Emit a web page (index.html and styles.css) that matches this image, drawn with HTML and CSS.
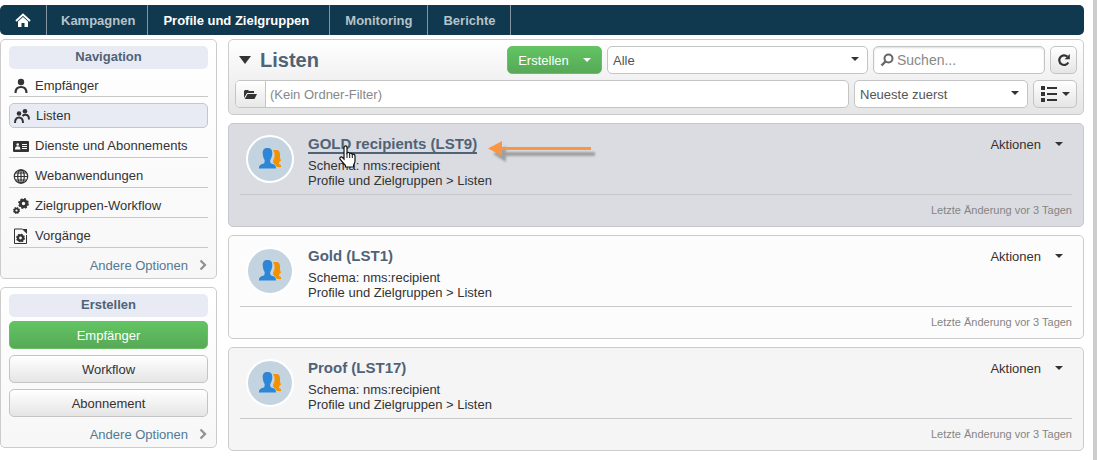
FILE: index.html
```html
<!DOCTYPE html>
<html lang="de">
<head>
<meta charset="utf-8">
<title>Listen</title>
<link rel="stylesheet" href="styles.css">
</head>
<body>
<svg class="defs" aria-hidden="true">
  <symbol id="caret" viewBox="0 0 8 4"><path d="M0 0h8L4 4z" fill="currentColor"/></symbol>
  <symbol id="chevron" viewBox="0 0 8 12"><path d="M1.500 1.500 6 6l-4.500 4.500" fill="none" stroke="#929292" stroke-width="2.300"/></symbol>
  <symbol id="people" viewBox="0 0 22 22">
    <path d="M14 2h3.500c2.500 0 3.500 2 3.500 4.500V10l1 2.500-1.500 1-.5 2.500 2 1.200V19h-4l-2.500-3-1.500-1.500V13l1.500-3.500V5z" fill="#f39200"/>
    <path d="M8.500 0c3.500 0 5 2 4.800 5.500-.2 2.500-.8 4.500-2 6.500-.3 2 .2 3.300 1.500 3.800 2.700.8 4.200 1.400 4.200 4.700H0c0-3.300 1.500-3.900 4.200-4.700 1.300-.5 1.700-1.800 1.400-3.800C4.400 10 3.900 8 3.700 5.500 3.500 2 5 0 8.500 0z" fill="#2e86d6"/>
  </symbol>
  <symbol id="gear" viewBox="-8 -8 16 16">
    <circle r="4.500" fill="none" stroke="currentColor" stroke-width="4"/>
    <circle r="6.700" fill="none" stroke="currentColor" stroke-width="2.400" stroke-dasharray="3 2.260"/>
  </symbol>
</svg>
<div class="page">
  <nav class="topbar" aria-label="Hauptmenü">
    <a class="tab home" href="#" aria-label="Startseite"><svg width="16" height="15" viewBox="0 0 16 15"><path d="M1 8 8 1.500 15 8" fill="none" stroke="#fff" stroke-width="2"/><path d="M3 8.500 8 4l5 4.500V14H9.500v-4h-3v4H3z" fill="#fff"/></svg></a>
    <a class="tab narrow" href="#">Kampagnen</a>
    <a class="tab active" href="#">Profile und Zielgruppen</a>
    <a class="tab" href="#">Monitoring</a>
    <a class="tab" href="#">Berichte</a>
  </nav>
  <div class="columns">
    <aside class="sidebar">
      <section class="panel">
        <h2 class="panel-title">Navigation</h2>
        <ul class="menu">
          <li><a class="item first" href="#"><svg class="icon" viewBox="0 0 16 16"><circle cx="8" cy="4" r="3.200" fill="currentColor"/><path d="M2.500 15c0-4 2-6 5.500-6s5.500 2 5.500 6" fill="none" stroke="currentColor" stroke-width="2.200"/></svg>Empfänger</a></li>
          <li><a class="item current" href="#"><svg class="icon" viewBox="0 0 16 16"><circle cx="5" cy="5.500" r="2.300" fill="currentColor"/><circle cx="11" cy="3.200" r="2.300" fill="currentColor"/><path d="M1 15c0-3.500 1.300-5.500 4-5.500s4 2 4 5.500M8.500 8c1-1 2-1.200 3-1.200 2.500 0 3.500 1.800 3.500 4.700" fill="none" stroke="currentColor" stroke-width="2"/></svg>Listen</a></li>
          <li><a class="item" href="#"><svg class="icon" viewBox="0 0 16 16"><rect y="3" width="16" height="11" rx="1" fill="currentColor"/><circle cx="4.700" cy="6.500" r="1.300" fill="#fff"/><path d="M2 11.500c0-2 1-3.200 2.700-3.200s2.700 1.200 2.700 3.200z" fill="#fff"/><path d="M9 6.500h5M9 8.500h5M9 10.500h5" stroke="#fff"/></svg>Dienste und Abonnements</a></li>
          <li><a class="item" href="#"><svg class="icon" viewBox="0 0 16 16" fill="none" stroke="currentColor" stroke-width="1.200"><circle cx="8" cy="8.500" r="6.700"/><ellipse cx="8" cy="8.500" rx="3.300" ry="6.700"/><path d="M8 2v13M1 8.500h14M2.500 5h11M2.500 12h11"/></svg>Webanwendungen</a></li>
          <li><a class="item" href="#"><svg class="icon" viewBox="0 0 16 16"><use href="#gear" x="5" y="0" width="11" height="11"/><use href="#gear" x="0" y="9" width="7" height="7"/></svg>Zielgruppen-Workflow</a></li>
          <li><a class="item" href="#"><svg class="icon" viewBox="0 0 16 16"><path d="M1.500 1h8M1.500 1v14.500h12V7" fill="none" stroke="currentColor"/><path d="M9 1l5 5V1z" fill="currentColor"/><use href="#gear" x="3" y="5.500" width="9" height="9"/></svg>Vorgänge</a></li>
        </ul>
        <a class="more" href="#">Andere Optionen<svg width="8" height="12"><use href="#chevron"/></svg></a>
      </section>
      <section class="panel">
        <h2 class="panel-title">Erstellen</h2>
        <div class="actions">
          <button class="btn primary" type="button">Empfänger</button>
          <button class="btn" type="button">Workflow</button>
          <button class="btn" type="button">Abonnement</button>
        </div>
        <a class="more" href="#">Andere Optionen<svg width="8" height="12"><use href="#chevron"/></svg></a>
      </section>
    </aside>
    <main class="content">
      <header class="toolbar">
        <div class="row">
          <h1 class="title"><svg width="12" height="8" viewBox="0 0 12 8"><path d="M0 0h12L6 8z" fill="#333"/></svg>Listen</h1>
          <button class="btn primary create" type="button">Erstellen<svg class="caret" width="8" height="4"><use href="#caret"/></svg></button>
          <div class="select wide">
            <select aria-label="Filter"><option>Alle</option></select>
            <svg class="caret" width="8" height="4"><use href="#caret"/></svg>
          </div>
          <label class="field search">
            <svg width="14" height="14" viewBox="0 0 14 14" fill="none" stroke="#666"><circle cx="8.500" cy="5.500" r="4" stroke-width="2"/><path d="m5.500 8.500-4 4" stroke-width="2.400"/></svg>
            <input type="text" placeholder="Suchen..." aria-label="Suchen">
          </label>
          <button class="btn square" type="button" aria-label="Aktualisieren"><svg width="14" height="14" viewBox="0 0 14 14"><path d="M10.300 3.600A4.800 4.800 0 1 0 11.300 9.500" fill="none" stroke="#333" stroke-width="2.200"/><path d="M12.800 1v5.200H7.600z" fill="#333"/></svg></button>
        </div>
        <div class="row">
          <div class="field folder">
            <button class="folder-btn" type="button" aria-label="Ordner wählen"><svg width="13" height="9" viewBox="0 0 13 9"><path d="M0 8V1l1-1h3l1 1h5v2H3z" fill="#333"/><path d="M3.500 4H13l-2.500 5H.8z" fill="#333"/></svg></button>
            <input type="text" placeholder="(Kein Ordner-Filter)" aria-label="Ordner-Filter">
          </div>
          <div class="select sort">
            <select aria-label="Sortierung"><option>Neueste zuerst</option></select>
            <svg class="caret" width="8" height="4"><use href="#caret"/></svg>
          </div>
          <button class="btn view" type="button" aria-label="Ansicht"><svg width="16" height="16" viewBox="0 0 16 16"><path d="M0 0h4v4H0zM0 6h4v4H0zM0 12h4v4H0zM6 1h10v2H6zM6 7h10v2H6zM6 13h10v2H6z" fill="#333"/></svg><svg class="caret" width="8" height="4"><use href="#caret"/></svg></button>
        </div>
      </header>
      <article class="card hovered">
        <div class="card-main">
          <span class="avatar"><svg width="22" height="22"><use href="#people"/></svg></span>
          <div class="info">
            <h3><a href="#">GOLD recipients (LST9)</a></h3>
            <p>Schema: nms:recipient</p>
            <p>Profile und Zielgruppen &gt; Listen</p>
          </div>
          <button class="menu-btn" type="button">Aktionen<svg class="caret" width="8" height="4"><use href="#caret"/></svg></button>
        </div>
        <footer>Letzte Änderung vor 3 Tagen</footer>
        <svg class="pointer" width="17" height="24" viewBox="0 0 17 24"><path d="M5 2.500C5 .4 8 .4 8 2.500V8c1-1 2.500-.6 2.700.6 1-.7 2.300-.3 2.500.8 1.200-.6 2.800 0 2.800 1.600v5c0 2-1.500 3-1.500 5v1h-8v-1.500L1.200 14.500C0 12.500 2 11 3.500 12.500L5 14z" fill="#fff" stroke="#111" stroke-width="1.200"/><path d="M8 8v5M10.700 9v4M13.300 10v3" stroke="#111"/></svg>
        <svg class="arrow" width="114" height="26" viewBox="0 0 114 26"><g class="shade"><path d="M6 14 19 6v6h89v4H19v6z" fill="#777"/></g><path d="M1 8.500 15 1v6h89v3H15v6z" fill="#f79646"/></svg>
      </article>
      <article class="card">
        <div class="card-main">
          <span class="avatar"><svg width="22" height="22"><use href="#people"/></svg></span>
          <div class="info">
            <h3><a href="#">Gold (LST1)</a></h3>
            <p>Schema: nms:recipient</p>
            <p>Profile und Zielgruppen &gt; Listen</p>
          </div>
          <button class="menu-btn" type="button">Aktionen<svg class="caret" width="8" height="4"><use href="#caret"/></svg></button>
        </div>
        <footer>Letzte Änderung vor 3 Tagen</footer>
      </article>
      <article class="card alt">
        <div class="card-main">
          <span class="avatar"><svg width="22" height="22"><use href="#people"/></svg></span>
          <div class="info">
            <h3><a href="#">Proof (LST17)</a></h3>
            <p>Schema: nms:recipient</p>
            <p>Profile und Zielgruppen &gt; Listen</p>
          </div>
          <button class="menu-btn" type="button">Aktionen<svg class="caret" width="8" height="4"><use href="#caret"/></svg></button>
        </div>
        <footer>Letzte Änderung vor 3 Tagen</footer>
      </article>
    </main>
  </div>
</div>
</body>
</html>
```
FILE: styles.css
```css
* { box-sizing: border-box; }
body {
  margin: 0;
  background: #fff;
  color: #333;
  font: 13px/15px "Liberation Sans", Arial, sans-serif;
}
h1, h2, h3, p, ul { margin: 0; padding: 0; }
ul { list-style: none; }
a { color: inherit; text-decoration: none; }
svg { flex: none; display: block; }
button, input, select { font: inherit; color: inherit; }
button { cursor: pointer; }
.defs { position: absolute; width: 0; height: 0; }

.page {
  min-height: 100vh;
  padding: 5px 9px 7px 0;
  border-right: 4px solid #cdcdcd;
}
.topbar {
  display: flex;
  height: 30px;
  overflow: hidden;
  border-radius: 5px;
  background: #10384f;
  color: #b5c3ca;
  font-weight: bold;
}
.tab {
  display: flex;
  align-items: center;
  padding: 0 15px;
  border-right: 1px solid #8296a3;
}
.tab.narrow { padding: 0 12px 0 14px; }
.tab.active { padding-right: 20px; color: #fff; }

.columns { display: flex; align-items: flex-start; gap: 11px; margin-top: 4px; }
.sidebar { flex: none; width: 217px; display: flex; flex-direction: column; gap: 8px; }
.content { flex: 1; min-width: 0; display: flex; flex-direction: column; gap: 8px; }

.panel {
  padding: 6px 8px 1px;
  border: 1px solid #ccc;
  border-radius: 5px;
  background: linear-gradient(#fff, #f7f7f7);
}
.panel-title {
  height: 23px;
  border-radius: 5px;
  background: #e8ebf3;
  color: #4f6377;
  font-size: 13px;
  line-height: 22px;
  text-align: center;
}
.item {
  display: flex;
  align-items: center;
  gap: 6px;
  height: 30px;
  padding: 6px 4px 0;
  border-bottom: 1px solid #c8c8c8;
}
.item.first { height: 28px; }
.item.current {
  height: 25px;
  margin-top: 6px;
  padding-top: 0;
  border: 1px solid #c4c6cc;
  border-radius: 5px;
  background: #e8ebf3;
}
.icon { width: 16px; height: 16px; }
.more {
  display: flex;
  justify-content: flex-end;
  align-items: center;
  gap: 11px;
  height: 24px;
  margin-top: 5px;
  padding: 0 1px;
  color: #527994;
}
.actions { display: flex; flex-direction: column; gap: 6px; padding-top: 4px; }

.btn {
  display: flex;
  align-items: center;
  justify-content: center;
  height: 28px;
  padding: 0;
  border: 1px solid #c4c4c4;
  border-radius: 5px;
  background: linear-gradient(#fff, #e5e5e5);
}
.btn.primary {
  border-color: #69bf63;
  background: linear-gradient(#62c462, #57a957);
  color: #fff;
}

.toolbar {
  display: flex;
  flex-direction: column;
  gap: 6px;
  padding: 6px;
  border: 1px solid #ccc;
  border-radius: 5px;
  background: linear-gradient(#fff, #e5e5e5);
}
.row { display: flex; gap: 5px; }
.title {
  flex: 1;
  display: flex;
  align-items: center;
  gap: 9px;
  padding-left: 4px;
  color: #4f6377;
  font-size: 20px;
  line-height: 28px;
}
.create { width: 95px; gap: 14px; }
.select { position: relative; }
.select select {
  appearance: none;
  width: 100%;
  height: 28px;
  padding: 0 24px 0 5px;
  border: 1px solid #c4c4c4;
  border-radius: 5px;
  background: #fff;
  color: #555;
}
.select .caret {
  position: absolute;
  top: 11px;
  right: 9px;
  color: #333;
  pointer-events: none;
}
.wide { width: 261px; }
.sort { width: 174px; }
.field {
  display: flex;
  align-items: center;
  height: 28px;
  border: 1px solid #c4c4c4;
  border-radius: 5px;
  background: #fff;
  overflow: hidden;
}
.field input {
  flex: 1;
  min-width: 0;
  padding: 0;
  border: 0;
  outline: 0;
  background: none;
}
.field input::placeholder { color: #888; opacity: 1; }
.search { width: 172px; gap: 3px; padding-left: 6px; box-shadow: inset 0 1px 2px #ddd; }
.search input { font-size: 14px; }
.square { width: 27px; }
.folder { flex: 1; }
.folder-btn {
  display: flex;
  align-items: center;
  justify-content: center;
  width: 30px;
  height: 100%;
  margin-right: 4px;
  padding: 0;
  border: 0;
  border-right: 1px solid #c4c4c4;
  background: linear-gradient(#fff, #e8e8e8);
}
.view { width: 44px; gap: 5px; }

.card {
  position: relative;
  padding: 11px 11px 9px;
  border: 1px solid #ccc;
  border-radius: 5px;
  background: #fcfcfc;
}
.card.alt { background: #f5f5f5; }
.card.hovered { border-color: #c6c7cb; background: #dbdce1; }
.card-main {
  display: flex;
  align-items: flex-start;
  gap: 14px;
  height: 60px;
  padding-left: 6px;
  border-bottom: 1px solid #c8c8ca;
}
.avatar {
  display: flex;
  align-items: center;
  justify-content: center;
  width: 48px;
  height: 48px;
  border: 2px solid #fff;
  border-radius: 50%;
  background: #c3d4e0;
}
.info { flex: 1; }
.info h3 {
  margin-bottom: 5px;
  color: #4f6377;
  font-size: 15px;
  line-height: 18px;
}
.hovered h3 a { border-bottom: 2px solid #4f6377; }
.menu-btn {
  display: flex;
  align-items: center;
  gap: 14px;
  height: 18px;
  padding: 0 9px;
  border: 0;
  background: none;
}
.card footer {
  padding-top: 8px;
  color: #858585;
  font-size: 11px;
  line-height: 14px;
  text-align: right;
}
.pointer { position: absolute; left: 110px; top: 21px; }
.arrow { position: absolute; left: 258px; top: 16px; }
.shade { filter: blur(1px); opacity: .6; }
```
